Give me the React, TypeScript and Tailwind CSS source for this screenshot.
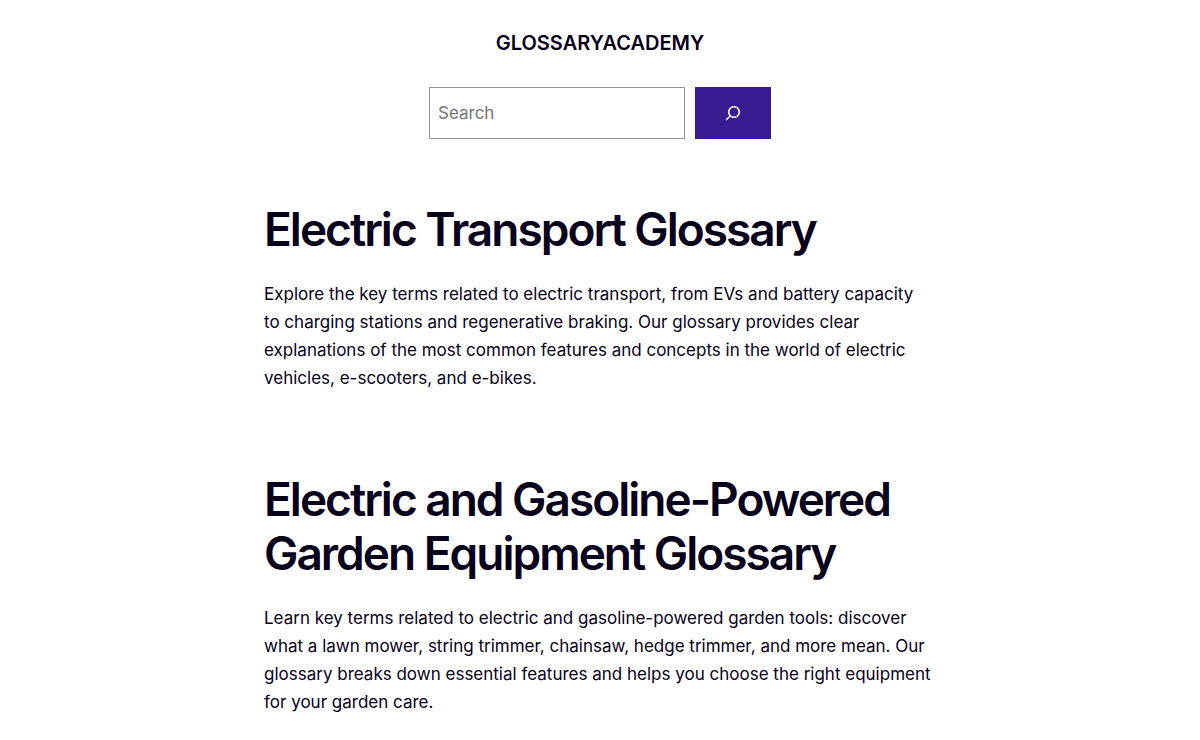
import React from 'react';

interface Glossary {
    slug: string;
    title: string;
    description: string;
}

const glossaries: Glossary[] = [
    {
        slug: 'electric-transport',
        title: 'Electric Transport Glossary',
        // non-breaking space keeps "to charging" together at the line end
        description:
            'Explore the key terms related to electric transport, from EVs and battery capacity to\u00a0charging stations and regenerative braking. Our glossary provides clear explanations of the most common features and concepts in the world of electric vehicles, e-scooters, and e-bikes.',
    },
    {
        slug: 'garden-equipment',
        title: 'Electric and Gasoline-Powered Garden Equipment Glossary',
        description:
            'Learn key terms related to electric and gasoline-powered garden tools: discover what a lawn mower, string trimmer, chainsaw, hedge trimmer, and more mean. Our glossary breaks down essential features and helps you choose the right equipment for your garden care.',
    },
];

const SearchForm: React.FC = () => (
    <form role="search" className="flex w-full max-w-[342px] gap-[10px]" onSubmit={(e) => e.preventDefault()}>
        <input
            type="search"
            aria-label="Search"
            placeholder="Search"
            className="h-[52px] min-w-0 flex-1 border border-[#949494] bg-white px-2 text-[17px] placeholder:text-[#757575]"
        />
        <button
            type="submit"
            aria-label="Search"
            className="flex h-[52px] w-[76px] items-center justify-center bg-[#391b91] text-white"
        >
            <svg width="24" height="24" viewBox="0 0 24 24" fill="currentColor">
                <path d="M13 5c-3.3 0-6 2.7-6 6 0 1.4.5 2.7 1.3 3.7l-3.8 3.8 1.1 1.1 3.8-3.8c1 .8 2.3 1.3 3.7 1.3 3.3 0 6-2.7 6-6S16.3 5 13 5zm0 10.5c-2.5 0-4.5-2-4.5-4.5s2-4.5 4.5-4.5 4.5 2 4.5 4.5-2 4.5-4.5 4.5z"></path>
            </svg>
        </button>
    </form>
);

export default function App() {
    return (
        <div className="bg-white font-[Inter,sans-serif] text-[#08001a]">
            <header className="flex flex-col items-center gap-7 px-6 pt-7">
                <a href="/" className="text-[20px] leading-[31px] font-semibold uppercase">GlossaryAcademy</a>
                <SearchForm />
            </header>
            <main className="mx-auto flex max-w-[720px] flex-col gap-20 px-6 pt-[63px] pb-6">
                {glossaries.map((glossary) => (
                    <section key={glossary.slug} className="flex flex-col gap-6">
                        <h2 className="text-[46px] leading-[54px] font-semibold tracking-[-2px]">{glossary.title}</h2>
                        <p className="text-[17px] leading-[28px]">{glossary.description}</p>
                    </section>
                ))}
            </main>
        </div>
    );
}
